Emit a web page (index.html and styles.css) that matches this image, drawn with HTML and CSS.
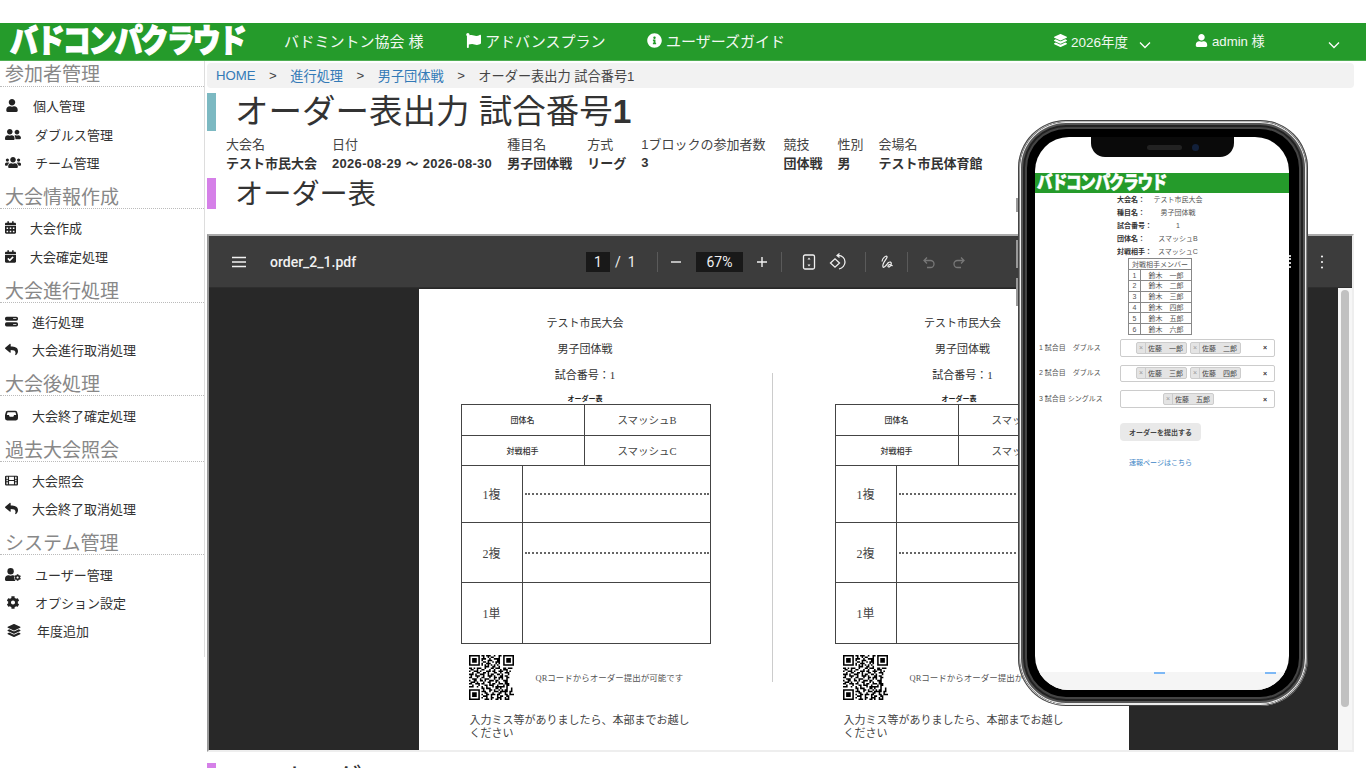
FILE: index.html
```html
<!DOCTYPE html>
<html lang="ja">
<head>
    <meta charset="UTF-8">
    <meta name="viewport" content="width=device-width, initial-scale=1.0">
    <title>オーダー表出力</title>
    <link rel="stylesheet" href="styles.css">
</head>
<body>
    <!-- Icons -->
    <svg class="defs" xmlns="http://www.w3.org/2000/svg">
        <symbol id="i-user" viewBox="0 0 448 512"><path d="M224 256c70.7 0 128-57.3 128-128S294.7 0 224 0 96 57.3 96 128s57.3 128 128 128zm89.6 32h-16.7c-22.2 10.2-46.9 16-72.9 16s-50.6-5.8-72.9-16h-16.7C60.2 288 0 348.2 0 422.4V464c0 26.5 21.5 48 48 48h352c26.5 0 48-21.5 48-48v-41.6c0-74.2-60.2-134.4-134.4-134.4z"/></symbol>
        <symbol id="i-friends" viewBox="0 0 640 512"><path d="M192 256c61.9 0 112-50.1 112-112S253.9 32 192 32 80 82.1 80 144s50.1 112 112 112zm76.8 32h-8.3c-20.8 10-43.9 16-68.5 16s-47.6-6-68.5-16h-8.3C51.6 288 0 339.6 0 403.2V432c0 26.5 21.5 48 48 48h288c26.5 0 48-21.5 48-48v-28.8c0-63.6-51.6-115.2-115.2-115.2zM480 256c53 0 96-43 96-96s-43-96-96-96-96 43-96 96 43 96 96 96zm48 32h-3.8c-13.9 4.8-28.6 8-44.2 8s-30.3-3.2-44.2-8H432c-20.4 0-39.2 5.9-55.7 15.4 24.4 26.3 39.7 61.2 39.7 99.8v38.4c0 2.2-.5 4.3-.6 6.4H592c26.5 0 48-21.5 48-48 0-61.9-50.1-112-112-112z"/></symbol>
        <symbol id="i-users" viewBox="0 0 640 512"><path d="M96 224c35.3 0 64-28.7 64-64s-28.7-64-64-64-64 28.7-64 64 28.7 64 64 64zm448 0c35.3 0 64-28.7 64-64s-28.7-64-64-64-64 28.7-64 64 28.7 64 64 64zm32 32h-64c-17.6 0-33.5 7.1-45.1 18.6 40.3 22.1 68.9 62 75.1 109.4h66c17.7 0 32-14.3 32-32v-32c0-35.3-28.7-64-64-64zm-256 0c61.9 0 112-50.1 112-112S381.9 32 320 32 208 82.1 208 144s50.1 112 112 112zm76.8 32h-8.3c-20.8 10-43.9 16-68.5 16s-47.6-6-68.5-16h-8.3C179.6 288 128 339.6 128 403.2V432c0 26.5 21.5 48 48 48h288c26.5 0 48-21.5 48-48v-28.8c0-63.6-51.6-115.2-115.2-115.2zm-223.7-13.4C161.5 263.1 145.6 256 128 256H64c-35.3 0-64 28.7-64 64v32c0 17.7 14.3 32 32 32h65.9c6.3-47.4 34.9-87.3 75.2-109.4z"/></symbol>
        <symbol id="i-calendar" viewBox="0 0 448 512"><path d="M0 464c0 26.5 21.5 48 48 48h352c26.5 0 48-21.5 48-48V192H0v272zm320-196c0-6.6 5.4-12 12-12h40c6.6 0 12 5.4 12 12v40c0 6.6-5.4 12-12 12h-40c-6.6 0-12-5.4-12-12v-40zm0 128c0-6.6 5.4-12 12-12h40c6.6 0 12 5.4 12 12v40c0 6.6-5.4 12-12 12h-40c-6.6 0-12-5.4-12-12v-40zM192 268c0-6.6 5.4-12 12-12h40c6.6 0 12 5.4 12 12v40c0 6.6-5.4 12-12 12h-40c-6.6 0-12-5.4-12-12v-40zm0 128c0-6.6 5.4-12 12-12h40c6.6 0 12 5.4 12 12v40c0 6.6-5.4 12-12 12h-40c-6.6 0-12-5.4-12-12v-40zM64 268c0-6.6 5.4-12 12-12h40c6.6 0 12 5.4 12 12v40c0 6.6-5.4 12-12 12H76c-6.6 0-12-5.4-12-12v-40zm0 128c0-6.6 5.4-12 12-12h40c6.6 0 12 5.4 12 12v40c0 6.6-5.4 12-12 12H76c-6.6 0-12-5.4-12-12v-40zM400 64h-48V16c0-8.8-7.2-16-16-16h-32c-8.8 0-16 7.2-16 16v48H160V16c0-8.8-7.2-16-16-16h-32c-8.8 0-16 7.2-16 16v48H48C21.5 64 0 85.5 0 112v48h448v-48c0-26.5-21.5-48-48-48z"/></symbol>
        <symbol id="i-calcheck" viewBox="0 0 448 512"><path d="M436 160H12c-6.627 0-12-5.373-12-12v-36c0-26.51 21.49-48 48-48h48V12c0-6.627 5.373-12 12-12h40c6.627 0 12 5.373 12 12v52h128V12c0-6.627 5.373-12 12-12h40c6.627 0 12 5.373 12 12v52h48c26.51 0 48 21.49 48 48v36c0 6.627-5.373 12-12 12zM12 192h424c6.627 0 12 5.373 12 12v260c0 26.51-21.49 48-48 48H48c-26.51 0-48-21.49-48-48V204c0-6.627 5.373-12 12-12zm333.296 95.947l-28.169-28.398c-4.667-4.705-12.265-4.736-16.97-.068L194.12 364.665l-45.98-46.352c-4.667-4.705-12.266-4.736-16.971-.068l-28.397 28.17c-4.705 4.667-4.736 12.265-.068 16.97l82.601 83.269c4.667 4.705 12.265 4.736 16.97.068l142.953-141.805c4.705-4.667 4.736-12.265.068-16.97z"/></symbol>
        <symbol id="i-server" viewBox="0 0 16 14"><path fill-rule="evenodd" d="M2 1h12a2 2 0 0 1 2 2v1a2 2 0 0 1-2 2H2a2 2 0 0 1-2-2V3a2 2 0 0 1 2-2zm8 2v1h4V3zM2 8h12a2 2 0 0 1 2 2v1a2 2 0 0 1-2 2H2a2 2 0 0 1-2-2v-1a2 2 0 0 1 2-2zm8 2v1h4v-1z"/></symbol>
        <symbol id="i-reply" viewBox="0 0 512 512"><path d="M8.309 189.836L184.313 37.851C199.719 24.546 224 35.347 224 56.015v80.053c160.629 1.839 288 34.032 288 186.258 0 61.441-39.581 122.309-83.333 154.132-13.653 9.931-33.111-2.533-28.077-18.631 45.344-145.012-21.507-183.51-176.59-185.742V360c0 20.7-24.3 31.453-39.687 18.164l-176.004-152c-11.071-9.562-11.086-26.753 0-36.328z"/></symbol>
        <symbol id="i-inbox" viewBox="0 0 16 14"><path fill-rule="evenodd" d="M3.500 1h9a2.500 2.500 0 0 1 2.400 1.800l1 3.400c.1.300.1.500.1.800v3.500A2.500 2.500 0 0 1 13.500 13h-11A2.500 2.500 0 0 1 0 10.500V7c0-.3 0-.5.100-.8l1-3.400A2.500 2.500 0 0 1 3.500 1zm0 2a.6.6 0 0 0-.5.400L2.200 6.500h2.600l1 2h4.400l1-2h2.600l-.8-3.100a.6.6 0 0 0-.5-.4z"/></symbol>
        <symbol id="i-film" viewBox="0 0 16 14"><path fill-rule="evenodd" d="M1.500 1h13A1.500 1.500 0 0 1 16 2.500v9a1.500 1.500 0 0 1-1.500 1.500h-13A1.500 1.500 0 0 1 0 11.500v-9A1.500 1.500 0 0 1 1.500 1zm.3 1.500V5h1.700V2.500zm0 3.700v1.600h1.700V6.200zm0 2.900v2.400h1.700V9.100zM5 2.500v3.800h6V2.500zm0 5.200v3.800h6V7.700zm7.500-5.200V5h1.700V2.500zm0 3.700v1.600h1.700V6.200zm0 2.900v2.400h1.700V9.100z"/></symbol>
        <symbol id="i-cog" viewBox="0 0 512 512"><path d="M487.4 315.7l-42.6-24.6c4.3-23.2 4.3-47 0-70.2l42.6-24.6c4.9-2.8 7.1-8.6 5.5-14-11.1-35.6-30-67.8-54.7-94.6-3.8-4.1-10-5.1-14.8-2.3L380.8 110c-17.9-15.4-38.5-27.3-60.8-35.1V25.8c0-5.6-3.9-10.5-9.4-11.7-36.7-8.2-74.3-7.8-109.2 0-5.5 1.2-9.4 6.1-9.4 11.7V75c-22.2 7.9-42.8 19.8-60.8 35.1L88.7 85.500c-4.9-2.8-11-1.9-14.8 2.3-24.7 26.7-43.6 58.9-54.7 94.6-1.7 5.4.6 11.2 5.5 14L67.3 221c-4.3 23.2-4.3 47 0 70.2l-42.6 24.6c-4.9 2.8-7.1 8.6-5.5 14 11.1 35.6 30 67.8 54.7 94.6 3.8 4.1 10 5.1 14.8 2.3l42.6-24.6c17.9 15.4 38.5 27.3 60.8 35.1v49.2c0 5.6 3.9 10.5 9.4 11.7 36.7 8.2 74.3 7.8 109.2 0 5.5-1.2 9.4-6.1 9.4-11.7v-49.2c22.2-7.9 42.8-19.8 60.8-35.1l42.6 24.6c4.9 2.8 11 1.9 14.8-2.3 24.7-26.7 43.6-58.9 54.7-94.6 1.5-5.5-.7-11.3-5.6-14.1zM256 336c-44.1 0-80-35.9-80-80s35.9-80 80-80 80 35.9 80 80-35.9 80-80 80z"/></symbol>
        <symbol id="i-usercog" viewBox="0 0 640 512"><circle cx="224" cy="128" r="128"/><path d="M313 288h-17c-22 10-47 16-72 16s-51-6-73-16h-17C60 288 0 348 0 422v42c0 26 22 48 48 48h352c8 0 15-2 22-5-30-30-52-70-52-115 0-30 8-58 22-82-20-14-48-22-79-22z"/><use href="#i-cog" x="368" y="240" width="272" height="272"/></symbol>
        <symbol id="i-layers" viewBox="0 0 512 512"><path d="M12.41 148.02l232.94 105.67c6.8 3.09 14.49 3.09 21.29 0l232.94-105.67c16.55-7.51 16.55-32.52 0-40.03L266.65 2.31a25.607 25.607 0 0 0-21.29 0L12.41 107.98c-16.55 7.51-16.55 32.53 0 40.04zm487.18 88.28l-58.09-26.33-161.64 73.27c-7.56 3.43-15.59 5.17-23.86 5.17s-16.29-1.74-23.86-5.17L70.51 209.97l-58.1 26.33c-16.55 7.5-16.55 32.5 0 40l232.94 105.59c6.8 3.08 14.49 3.08 21.29 0L499.59 276.3c16.55-7.5 16.55-32.5 0-40zm0 127.8l-57.87-26.23-161.86 73.37c-7.56 3.43-15.59 5.17-23.86 5.17s-16.29-1.74-23.86-5.17L70.29 337.87 12.41 364.1c-16.55 7.5-16.55 32.5 0 40l232.94 105.59c6.8 3.08 14.49 3.08 21.29 0L499.59 404.1c16.55-7.5 16.55-32.5 0-40z"/></symbol>
        <symbol id="i-flag" viewBox="0 0 512 512"><path d="M349.565 98.783C295.978 98.783 251.721 64 184.348 64c-24.955 0-47.309 4.384-68.045 12.013a55.947 55.947 0 0 0 3.586-23.562C118.117 24.015 94.806 1.206 66.338.048 34.345-1.254 8 24.296 8 56c0 19.026 9.497 35.825 24 45.945V488c0 13.255 10.745 24 24 24h16c13.255 0 24-10.745 24-24v-94.4c28.311-12.064 63.582-22.122 114.435-22.122 53.588 0 97.844 34.783 165.217 34.783 48.169 0 86.667-16.294 122.505-40.858C506.84 359.452 512 349.571 512 339.045v-243.1c0-23.393-24.269-38.87-45.485-29.016-34.338 15.948-76.454 31.854-116.95 31.854z"/></symbol>
        <symbol id="i-info" viewBox="0 0 512 512"><path d="M256 8C119.043 8 8 119.083 8 256c0 136.997 111.043 248 248 248s248-111.003 248-248C504 119.083 392.957 8 256 8zm0 110c23.196 0 42 18.804 42 42s-18.804 42-42 42-42-18.804-42-42 18.804-42 42-42zm56 254c0 6.627-5.373 12-12 12h-88c-6.627 0-12-5.373-12-12v-24c0-6.627 5.373-12 12-12h12v-64h-12c-6.627 0-12-5.373-12-12v-24c0-6.627 5.373-12 12-12h64c6.627 0 12 5.373 12 12v100h12c6.627 0 12 5.373 12 12v24z"/></symbol>
        <symbol id="i-chevron" viewBox="0 0 12 8"><path d="M1 1.500l5 5 5-5" fill="none" stroke="currentColor" stroke-width="1.300"/></symbol>
        <symbol id="i-qr" viewBox="0 0 29 29">
            <path fill-rule="evenodd" d="M0 0h7v7H0zm1 1v5h5V1zm1 1h3v3H2zM22 0h7v7h-7zm1 1v5h5V1zm1 1h3v3h-3zM0 22h7v7H0zm1 1v5h5v-5zm1 1h3v3H2z"/>
            <path fill="none" stroke="#000" d="M8 .5h2m1 0h3m2 0h1m2 0h2M9 1.500h1m2 0h1m1 0h2m3 0h1M8 2.500h3m2 0h1m2 0h4M8 3.500h1m3 0h3m3 0h2M9 4.500h2m1 0h1m2 0h1m1 0h3M8 5.500h1m2 0h3m3 0h1m1 0h1M8 6.500h1m1 0h1m1 0h1m1 0h1m1 0h1m1 0h1M10 7.500h3m2 0h2m2 0h1M0 8.500h2m1 0h1m1 0h3m2 0h1m3 0h2m1 0h3m2 0h2m1 0h3M1 9.500h2m2 0h1m2 0h2m3 0h1m2 0h1m3 0h1m1 0h3M0 10.500h1m2 0h3m1 0h1m3 0h3m1 0h2m2 0h3m2 0h1m1 0h1M2 11.500h1m2 0h2m2 0h2m1 0h1m3 0h2m2 0h1m2 0h3M0 12.500h3m1 0h1m2 0h3m2 0h1m1 0h2m2 0h2m1 0h1m3 0h1M1 13.500h1m2 0h3m2 0h1m2 0h3m1 0h1m3 0h2m1 0h2M0 14.500h2m3 0h1m2 0h2m3 0h1m2 0h2m1 0h3m2 0h2M2 15.500h3m2 0h1m2 0h3m3 0h1m2 0h1m1 0h1m2 0h1M0 16.500h1m2 0h2m2 0h2m1 0h1m2 0h3m1 0h2m3 0h3M1 17.500h3m1 0h1m3 0h1m2 0h2m3 0h1m1 0h1m3 0h2M0 18.500h2m2 0h3m1 0h2m3 0h1m1 0h2m2 0h3m1 0h3M2 19.500h1m3 0h1m3 0h2m1 0h3m2 0h1m3 0h1m1 0h2M0 20.500h3m2 0h1m2 0h1m2 0h1m3 0h1m1 0h6m1 0h1M8 21.500h2m1 0h3m3 0h2m1 0h1m3 0h1m2 0h1M9 22.500h1m3 0h2m1 0h1m2 0h1m1 0h1m1 0h2m2 0h1M8 23.500h3m2 0h1m2 0h3m1 0h5m1 0h2M10 24.500h2m3 0h1m3 0h2m2 0h1m2 0h1M8 25.500h1m2 0h2m1 0h3m1 0h2m3 0h2m1 0h3M9 26.500h3m2 0h1m3 0h1m1 0h2m2 0h2M8 27.500h1m2 0h1m2 0h2m2 0h3m2 0h1m1 0h1M10 28.500h3m1 0h1m2 0h2m1 0h1m2 0h3"/>
        </symbol>
    </svg>

    <!-- Navigation -->
    <nav class="navbar">
        <a class="logo">バドコンパクラウド</a>
        <span class="nav-item nav-org">バドミントン協会 様</span>
        <span class="nav-item nav-plan"><svg class="nav-icon"><use href="#i-flag"/></svg>アドバンスプラン</span>
        <span class="nav-item nav-guide"><svg class="nav-icon"><use href="#i-info"/></svg>ユーザーズガイド</span>
        <span class="nav-item nav-year"><svg class="nav-icon-sm"><use href="#i-layers"/></svg>2026年度</span>
        <svg class="nav-chevron nav-chevron-year"><use href="#i-chevron"/></svg>
        <span class="nav-item nav-admin"><svg class="nav-icon-sm"><use href="#i-user"/></svg>admin 様</span>
        <svg class="nav-chevron nav-chevron-admin"><use href="#i-chevron"/></svg>
    </nav>

    <div class="layout">
        <!-- Sidebar -->
        <aside class="sidebar">
            <h3 class="side-head side-first">参加者管理</h3>
            <ul class="side-list">
                <li><svg class="w14"><use href="#i-user"/></svg>個人管理</li>
                <li><svg class="w16"><use href="#i-friends"/></svg>ダブルス管理</li>
                <li><svg class="w16"><use href="#i-users"/></svg>チーム管理</li>
            </ul>
            <h3 class="side-head">大会情報作成</h3>
            <ul class="side-list">
                <li><svg class="w11"><use href="#i-calendar"/></svg>大会作成</li>
                <li><svg class="w11"><use href="#i-calcheck"/></svg>大会確定処理</li>
            </ul>
            <h3 class="side-head">大会進行処理</h3>
            <ul class="side-list">
                <li><svg class="w13"><use href="#i-server"/></svg>進行処理</li>
                <li><svg class="w13"><use href="#i-reply"/></svg>大会進行取消処理</li>
            </ul>
            <h3 class="side-head">大会後処理</h3>
            <ul class="side-list">
                <li><svg class="w13"><use href="#i-inbox"/></svg>大会終了確定処理</li>
            </ul>
            <h3 class="side-head">過去大会照会</h3>
            <ul class="side-list">
                <li><svg class="w13"><use href="#i-film"/></svg>大会照会</li>
                <li><svg class="w13"><use href="#i-reply"/></svg>大会終了取消処理</li>
            </ul>
            <h3 class="side-head">システム管理</h3>
            <ul class="side-list">
                <li><svg class="w16"><use href="#i-usercog"/></svg>ユーザー管理</li>
                <li><svg class="w16"><use href="#i-cog"/></svg>オプション設定</li>
                <li><svg class="w18"><use href="#i-layers"/></svg>年度追加</li>
            </ul>
        </aside>

        <!-- Main Content -->
        <main class="content">
            <div class="breadcrumb">
                <a>HOME</a><span class="crumb-sep">&gt;</span><a>進行処理</a><span class="crumb-sep">&gt;</span><a>男子団体戦</a><span class="crumb-sep">&gt;</span><span>オーダー表出力 試合番号1</span>
            </div>

            <h1 class="page-title">オーダー表出力 試合番号<b>1</b></h1>

            <table class="info-table">
                <tr>
                    <td>大会名</td><td class="info-date">日付</td><td>種目名</td><td>方式</td><td class="info-count">1ブロックの参加者数</td><td>競技</td><td>性別</td><td>会場名</td>
                </tr>
                <tr class="info-values">
                    <td>テスト市民大会</td><td class="info-date">2026-08-29 〜 2026-08-30</td><td>男子団体戦</td><td>リーグ</td><td class="info-count">3</td><td>団体戦</td><td>男</td><td>テスト市民体育館</td>
                </tr>
            </table>

            <h2 class="section-title">オーダー表</h2>

            <!-- PDF viewer -->
            <section class="viewer">
                <div class="viewer-bar">
                    <div class="bar-left">
                        <svg class="tb-icon tb-menu" viewBox="0 0 14 16"><path d="M0 3.500h14M0 8h14M0 12.500h14" stroke="currentColor" stroke-width="1.500" fill="none"/></svg>
                        <span class="file-name">order_2_1.pdf</span>
                    </div>
                    <div class="bar-center">
                        <span class="num-box page-box">1</span>
                        <span class="page-total">/ &nbsp;1</span>
                        <i class="bar-sep sep-a"></i>
                        <svg class="tb-icon zoom-minus" viewBox="0 0 16 16"><path d="M3 8h10" stroke="currentColor" stroke-width="1.400"/></svg>
                        <span class="num-box zoom-box">67%</span>
                        <svg class="tb-icon zoom-plus" viewBox="0 0 16 16"><path d="M3 8h10M8 3v10" stroke="currentColor" stroke-width="1.400"/></svg>
                        <i class="bar-sep sep-b"></i>
                        <svg class="tb-icon tool-fit" viewBox="0 0 16 16"><rect x="2.500" y="1" width="11" height="14" rx="1.500" fill="none" stroke="currentColor" stroke-width="1.300"/><path d="M8 3.500l1.500 2h-3zM8 12.500l1.500-2h-3z" fill="currentColor"/></svg>
                        <svg class="tb-icon tool-rotate" viewBox="0 0 18 18"><path d="M1.500 10L6 5.800l4.500 4.200L6 14.200z" fill="none" stroke="currentColor" stroke-width="1.300"/><path d="M9 2.500c4.500 0 7 3 7 6.500 0 3-2.500 6-6 7" fill="none" stroke="currentColor" stroke-width="1.300"/><path d="M10.500 .5L8 2.500l2.500 2" fill="none" stroke="currentColor" stroke-width="1.200"/></svg>
                        <i class="bar-sep sep-c"></i>
                        <svg class="tb-icon tool-draw" viewBox="0 0 16 16"><path d="M3 7.500C3 4.500 7 1 8 2.500 9 4.500 2.500 9 4 13c1 1.500 4-3 5.500-4.500 1.500-1 3-.5 2.800 1.500-.3 3-3.800 4-3.300 1.800.5-1.800 3-1.300 4.500.2" fill="none" stroke="currentColor" stroke-width="1.200"/></svg>
                        <i class="bar-sep sep-d"></i>
                        <svg class="tb-icon tool-undo" viewBox="0 0 16 16"><path d="M3.500 6.500h6a3.500 3.500 0 0 1 0 7H6M6 3.500l-3 3 3 3" fill="none" stroke="currentColor" stroke-width="1.300"/></svg>
                        <svg class="tb-icon tool-redo" viewBox="0 0 16 16"><path d="M12.500 6.500h-6a3.500 3.500 0 0 0 0 7H10M10 3.500l3 3-3 3" fill="none" stroke="currentColor" stroke-width="1.300"/></svg>
                    </div>
                    <div class="bar-right">
                        <svg class="tb-icon" viewBox="0 0 16 16"><path d="M8 2.500v.01M8 8v.01M8 13.500v.01" stroke="currentColor" stroke-width="2.200" stroke-linecap="round"/></svg>
                    </div>
                </div>
                <div class="viewer-body">
                    <div class="pdf-area">
                        <div class="pdf-page">
                            <div class="sheet sheet-left">
                                <p class="sheet-line">テスト市民大会</p>
                                <p class="sheet-line">男子団体戦</p>
                                <p class="sheet-line">試合番号：1</p>
                                <p class="sheet-caption">オーダー表</p>
                                <table class="order-table">
                                    <colgroup><col class="c1"><col class="c2"><col class="c3"></colgroup>
                                    <tr class="r-head"><td colspan="2" class="small-cell">団体名</td><td class="value-cell">スマッシュB</td></tr>
                                    <tr class="r-head"><td colspan="2" class="small-cell">対戦相手</td><td class="value-cell">スマッシュC</td></tr>
                                    <tr class="r-a"><td>1複</td><td colspan="2" class="dots-cell"><div class="dots"></div></td></tr>
                                    <tr class="r-b"><td>2複</td><td colspan="2" class="dots-cell"><div class="dots"></div></td></tr>
                                    <tr class="r-c"><td>1単</td><td colspan="2"></td></tr>
                                </table>
                                <div class="qr-row">
                                    <svg class="qr"><use href="#i-qr"/></svg>
                                    <span class="qr-text">QRコードからオーダー提出が可能です</span>
                                </div>
                                <p class="sheet-note">入力ミス等がありましたら、本部までお越しください</p>
                            </div>
                            <div class="sheet-rule"></div>
                            <div class="sheet sheet-right">
                                <p class="sheet-line">テスト市民大会</p>
                                <p class="sheet-line">男子団体戦</p>
                                <p class="sheet-line">試合番号：1</p>
                                <p class="sheet-caption">オーダー表</p>
                                <table class="order-table">
                                    <colgroup><col class="c1"><col class="c2"><col class="c3"></colgroup>
                                    <tr class="r-head"><td colspan="2" class="small-cell">団体名</td><td class="value-cell">スマッシュC</td></tr>
                                    <tr class="r-head"><td colspan="2" class="small-cell">対戦相手</td><td class="value-cell">スマッシュB</td></tr>
                                    <tr class="r-a"><td>1複</td><td colspan="2" class="dots-cell"><div class="dots"></div></td></tr>
                                    <tr class="r-b"><td>2複</td><td colspan="2" class="dots-cell"><div class="dots"></div></td></tr>
                                    <tr class="r-c"><td>1単</td><td colspan="2"></td></tr>
                                </table>
                                <div class="qr-row">
                                    <svg class="qr"><use href="#i-qr"/></svg>
                                    <span class="qr-text">QRコードからオーダー提出が可能です</span>
                                </div>
                                <p class="sheet-note">入力ミス等がありましたら、本部までお越しください</p>
                            </div>
                        </div>
                    </div>
                    <div class="scroll-track"><div class="scroll-thumb"></div></div>
                </div>
            </section>

            <h2 class="section-title section-next">QRオーダー</h2>
        </main>
    </div>

    <!-- Phone mockup over the page -->
    <div class="phone">
        <i class="phone-key key-a"></i>
        <i class="phone-key key-b"></i>
        <i class="phone-key key-c"></i>
        <div class="phone-band">
            <div class="screen">
                <div class="notch"><i class="speaker"></i><i class="camera"></i></div>
                <div class="m-bar"><span class="m-logo">バドコンパクラウド</span></div>
                <div class="m-body">
                    <table class="m-info">
                        <tr><th>大会名：</th><td>テスト市民大会</td></tr>
                        <tr><th>種目名：</th><td>男子団体戦</td></tr>
                        <tr><th>試合番号：</th><td>1</td></tr>
                        <tr><th>団体名：</th><td>スマッシュB</td></tr>
                        <tr><th>対戦相手：</th><td>スマッシュC</td></tr>
                    </table>
                    <table class="m-members">
                        <tr><th colspan="2">対戦相手メンバー</th></tr>
                        <tr><td>1</td><td>鈴木　一郎</td></tr>
                        <tr><td>2</td><td>鈴木　二郎</td></tr>
                        <tr><td>3</td><td>鈴木　三郎</td></tr>
                        <tr><td>4</td><td>鈴木　四郎</td></tr>
                        <tr><td>5</td><td>鈴木　五郎</td></tr>
                        <tr><td>6</td><td>鈴木　六郎</td></tr>
                    </table>
                    <div class="m-row">
                        <span class="m-label">1 試合目　ダブルス</span>
                        <div class="m-select">
                            <div class="m-tags"><span class="m-tag"><b>×</b>佐藤　一郎</span><span class="m-tag"><b>×</b>佐藤　二郎</span></div>
                            <span class="m-clear">×</span>
                        </div>
                    </div>
                    <div class="m-row">
                        <span class="m-label">2 試合目　ダブルス</span>
                        <div class="m-select">
                            <div class="m-tags"><span class="m-tag"><b>×</b>佐藤　三郎</span><span class="m-tag"><b>×</b>佐藤　四郎</span></div>
                            <span class="m-clear">×</span>
                        </div>
                    </div>
                    <div class="m-row">
                        <span class="m-label">3 試合目 シングルス</span>
                        <div class="m-select">
                            <div class="m-tags"><span class="m-tag"><b>×</b>佐藤　五郎</span></div>
                            <span class="m-clear">×</span>
                        </div>
                    </div>
                    <button class="m-submit">オーダーを提出する</button>
                    <a class="m-link">速報ページはこちら</a>
                </div>
                <div class="m-foot"><i class="tick tick-a"></i><i class="tick tick-b"></i></div>
            </div>
        </div>
        <i class="phone-dots"></i>
    </div>
</body>
</html>
```

FILE: styles.css
```css
/* Base */
* {
    box-sizing: border-box;
}

html, body {
    height: 768px;
    overflow: hidden;
}

body {
    margin: 0;
    padding-top: 23px;
    background-color: white;
    color: #333;
    font-family: "Liberation Sans", "Noto Sans CJK JP", sans-serif;
    font-size: 13px;
    position: relative;
}

.defs {
    display: none;
}

/* Navbar */
.navbar {
    display: flex;
    align-items: center;
    height: 38px;
    background-color: #259b2b;
    color: white;
    border-bottom: 1px solid #4fae53;
}

.logo {
    width: 284px;
    padding-left: 10px;
    font-size: 28px;
    font-weight: 900;
    letter-spacing: -2px;
    line-height: 34px;
    white-space: nowrap;
    -webkit-text-stroke: 1px white;
    transform: scaleY(1.15);
}

.nav-item {
    display: flex;
    align-items: center;
    padding-bottom: 2px;
    font-size: 15px;
    white-space: nowrap;
    color: #f2f8f2;
}

.nav-icon {
    width: 15px;
    height: 15px;
    margin-right: 4px;
    fill: white;
}

.nav-icon-sm {
    width: 13px;
    height: 13px;
    margin-right: 4px;
    fill: white;
}

.nav-org {
    width: 182px;
}

.nav-plan {
    width: 181px;
}

.nav-guide {
    width: 407px;
}

.nav-year {
    width: 85px;
    font-size: 13.500px;
}

.nav-admin {
    width: 133px;
    font-size: 13.200px;
}

.nav-chevron {
    width: 12px;
    height: 8px;
    margin-top: 6px;
    color: white;
}

.nav-chevron-year {
    margin-right: 44px;
}

/* Sidebar */
.layout {
    display: flex;
    align-items: flex-start;
}

.sidebar {
    width: 205px;
    height: 596px;
    flex-shrink: 0;
    border-right: 1px solid #ddd;
}

.side-head {
    margin: 0;
    height: 31px;
    padding: 10px 0 0 5px;
    border-bottom: 1px dotted #bbb;
    color: #888;
    font-size: 19px;
    font-weight: normal;
    line-height: 20px;
}

.side-first {
    height: 26px;
    padding-top: 4px;
}

.side-list {
    list-style: none;
    margin: 0;
    padding: 4.500px 0 1.400px 5px;
}

.side-list li {
    display: flex;
    align-items: center;
    height: 28.400px;
    color: #333;
    font-size: 13px;
}

.side-list svg {
    height: 13px;
    margin-right: 14px;
    fill: #222;
}

.w11 { width: 11px; }
.w13 { width: 13px; }
.w14 { width: 14px; }
.w16 { width: 16px; }
.w18 { width: 18px; }

/* Main content */
.content {
    width: 1147px;
    margin-left: 2px;
    padding-top: 2px;
}

.breadcrumb {
    display: flex;
    align-items: center;
    height: 25px;
    padding-left: 9px;
    background-color: #f2f2f2;
    border-radius: 4px;
    font-size: 13.200px;
    color: #444;
}

.breadcrumb a {
    color: #337ab7;
}

.crumb-sep {
    margin: 0 13.500px;
}

.page-title {
    margin: 5px 0 0;
    height: 38px;
    padding-left: 19px;
    border-left: 9px solid #7cb9c2;
    color: #333;
    font-size: 33.500px;
    font-weight: normal;
    line-height: 38px;
}

.info-table {
    border-collapse: collapse;
    margin: 3px 0 0 19px;
    font-size: 13px;
}

.info-table td {
    padding: 0 15px 0 0;
    height: 19px;
    white-space: nowrap;
    color: #444;
}

.info-table .info-count {
    padding-right: 18px;
}

.info-values td {
    font-weight: bold;
    color: #333;
}

.info-values .info-date {
    letter-spacing: .3px;
}

.section-title {
    margin: 6px 0 0;
    height: 31px;
    padding-left: 19px;
    border-left: 9px solid #d580e8;
    color: #333;
    font-size: 28.200px;
    font-weight: normal;
    line-height: 33px;
}

.section-next {
    margin-top: 11px;
}

/* PDF viewer */
.viewer {
    height: 518px;
    margin-top: 25px;
    border: 2px solid #eee;
    border-top-color: #aaa;
    border-left-color: #999;
    background-color: #282828;
}

.viewer-bar {
    display: grid;
    grid-template-columns: 1fr auto 1fr;
    align-items: center;
    height: 52px;
    background-color: #3c3c3c;
    color: #f1f1f1;
    border-bottom: 1px solid #2e2e2e;
}

.bar-left {
    display: flex;
    align-items: center;
    padding-left: 23px;
}

.tb-icon {
    width: 16px;
    height: 16px;
    flex-shrink: 0;
}

.tb-menu {
    width: 14px;
}

.file-name {
    margin-left: 24px;
    font-family: Roboto, sans-serif;
    font-size: 14px;
    font-weight: 500;
}

.bar-center {
    display: flex;
    align-items: center;
    padding-right: 8px;
    font-family: Roboto, sans-serif;
    font-size: 14px;
}

.num-box {
    height: 20px;
    line-height: 20px;
    text-align: center;
    background-color: #191919;
}

.page-box {
    width: 24px;
}

.page-total {
    margin-left: 5px;
    width: 24px;
    white-space: nowrap;
}

.bar-sep {
    width: 1px;
    height: 20px;
    background-color: #5a5a5a;
}

.sep-a { margin-left: 18px; }
.zoom-minus { margin-left: 10px; }
.zoom-box { width: 47px; margin-left: 12px; }
.zoom-plus { margin-left: 11px; }
.sep-b { margin-left: 11px; }
.tool-fit { margin-left: 19px; }
.tool-rotate { margin-left: 12px; width: 18px; height: 18px; }
.sep-c { margin-left: 18px; }
.tool-draw { margin-left: 13px; }
.sep-d { margin-left: 12px; }
.tool-undo { margin-left: 13px; color: #777; }
.tool-redo { margin-left: 14px; color: #777; }

.bar-right {
    display: flex;
    justify-content: flex-end;
    padding-right: 22px;
}

.viewer-body {
    display: flex;
    height: 462px;
}

.pdf-area {
    flex: 1;
    display: flex;
    justify-content: center;
    padding-top: 1px;
    overflow: hidden;
}

.scroll-track {
    width: 14px;
    background-color: #f6f6f6;
    padding: 2px 3px 0 3px;
}

.scroll-thumb {
    height: 417px;
    border-radius: 4px;
    background-color: #c1c1c1;
}

/* PDF page */
.pdf-page {
    display: flex;
    align-items: flex-start;
    width: 710px;
    background-color: white;
    color: #333;
    font-family: "Liberation Serif", "Noto Sans CJK JP", serif;
}

.sheet {
    padding-top: 27px;
}

.sheet-left {
    width: 353px;
    padding-left: 42px;
}

.sheet-right {
    padding-left: 62px;
}

.sheet-rule {
    width: 1px;
    height: 309px;
    margin-top: 84px;
    background-color: #ccc;
    flex-shrink: 0;
}

.sheet-line {
    width: 249px;
    margin: 0;
    height: 26px;
    text-align: center;
    font-size: 11px;
    line-height: 14px;
}

.sheet-right .sheet-line {
    padding-left: 7px;
}

.sheet-caption {
    width: 249px;
    margin: 0;
    height: 8px;
    text-align: center;
    font-family: "Noto Sans CJK JP", sans-serif;
    font-size: 7px;
    font-weight: bold;
    line-height: 8px;
    color: #222;
}

.order-table {
    width: 249px;
    margin-top: 2px;
    border-collapse: collapse;
    table-layout: fixed;
    color: #444;
}

.c1 { width: 61px; }
.c2 { width: 62px; }
.c3 { width: 126px; }

.order-table td {
    padding: 0;
    border: 1px solid #444;
    text-align: center;
    font-size: 12px;
}

.r-head {
    height: 30.500px;
}

.r-a { height: 57px; }
.r-b { height: 60px; }
.r-c { height: 61px; }

.order-table .small-cell {
    font-family: "Noto Sans CJK JP", sans-serif;
    font-size: 8px;
    font-weight: 500;
    color: #333;
}

.order-table .value-cell {
    font-size: 10.500px;
}

.order-table .dots-cell {
    padding: 0 1px 0 2px;
}

.dots {
    border-top: 2px dotted #666;
}

.qr-row {
    display: flex;
    align-items: center;
    margin-top: 11px;
    padding-left: 7px;
}

.qr {
    width: 47px;
    height: 45px;
    flex-shrink: 0;
}

.qr-text {
    margin: 0 0 2px 21px;
    font-size: 8.500px;
    white-space: nowrap;
    color: #555;
}

.sheet-note {
    width: 222px;
    margin: 14px 0 0 9px;
    font-size: 11px;
    line-height: 13px;
    color: #444;
}

/* Phone mockup */
.phone {
    position: absolute;
    left: 1018px;
    top: 120px;
    width: 290px;
    height: 586px;
    padding: 2px;
    border-radius: 48px;
    background: linear-gradient(180deg, #bbb 0%, #888 12%, #777 50%, #888 90%, #eee 100%);
    box-shadow: inset 0 0 0 1px #444;
}

.phone-key {
    position: absolute;
    left: -2px;
    width: 2px;
    background-color: #999;
}

.key-a { top: 78px; height: 14px; }
.key-b { top: 120px; height: 28px; }
.key-c { top: 158px; height: 28px; }

.phone-band {
    width: 100%;
    height: 100%;
    padding: 15px 17px 14px 15px;
    border-radius: 46px;
    background-color: #000;
    box-shadow: inset 0 0 0 1px #eee, inset 0 0 0 3px #555, inset 0 0 0 5px #222, inset 0 0 0 7px #444;
}

.phone-dots {
    position: absolute;
    left: 271px;
    top: 135px;
    height: 13px;
    border-left: 2px dotted #ccc;
}

.screen {
    position: relative;
    display: flex;
    flex-direction: column;
    height: 100%;
    padding-top: 36px;
    background-color: white;
    border-radius: 34px;
    overflow: hidden;
}

.notch {
    position: absolute;
    left: 56px;
    top: 0;
    display: flex;
    align-items: center;
    justify-content: flex-end;
    width: 143px;
    height: 20px;
    padding-right: 35px;
    background-color: #0a0a0a;
    border-radius: 0 0 14px 14px;
}

.speaker {
    width: 35px;
    height: 5px;
    margin-right: 10px;
    background-color: #222;
    border-radius: 3px;
}

.camera {
    width: 7px;
    height: 7px;
    border-radius: 50%;
    background-color: #12203a;
}

.m-bar {
    height: 20px;
    background-color: #259b2b;
    padding-left: 2px;
    color: white;
}

.m-logo {
    display: block;
    font-size: 15.500px;
    font-weight: 900;
    letter-spacing: -1.200px;
    line-height: 20px;
    white-space: nowrap;
    -webkit-text-stroke: .5px white;
    transform: scaleY(1.15);
}

.m-body {
    flex: 1;
    display: flex;
    flex-direction: column;
    align-items: flex-start;
    color: #555;
    font-size: 7px;
}

.m-info {
    margin: 0 0 0 82px;
    border-collapse: collapse;
}

.m-info th {
    height: 12.900px;
    padding: 0;
    text-align: left;
    color: #333;
    font-weight: bold;
    white-space: nowrap;
}

.m-info td {
    width: 52px;
    padding: 0;
    text-align: center;
    white-space: nowrap;
}

.m-members {
    width: 64px;
    margin: 1px 0 0 93px;
    border-collapse: collapse;
}

.m-members th,
.m-members td {
    height: 10.800px;
    padding: 0;
    border: 1px solid #888;
    text-align: center;
    font-weight: normal;
    line-height: 9px;
    white-space: nowrap;
}

.m-members td:first-child {
    width: 12px;
}

.m-row {
    display: flex;
    align-items: center;
    height: 17.500px;
    margin-top: 8.200px;
    padding-left: 4px;
}

.m-row:first-of-type {
    margin-top: 4px;
}

.m-label {
    width: 81px;
    padding-bottom: 2px;
    white-space: nowrap;
}

.m-select {
    display: flex;
    align-items: center;
    width: 155px;
    height: 17.500px;
    border: 1px solid #ccc;
    border-radius: 2px;
}

.m-tags {
    flex: 1;
    display: flex;
    justify-content: center;
    gap: 3px;
}

.m-tag {
    display: flex;
    align-items: center;
    width: 51px;
    height: 12px;
    background-color: #e4e4e4;
    border: 1px solid #ccc;
    border-radius: 2px;
    white-space: nowrap;
    color: #444;
}

.m-tag b {
    width: 9px;
    margin-right: 2px;
    border-right: 1px solid #ccc;
    text-align: center;
    color: #999;
    font-weight: normal;
    line-height: 10px;
}

.m-clear {
    width: 18px;
    text-align: center;
    color: #333;
    font-weight: bold;
}

.m-submit {
    width: 81px;
    height: 18px;
    margin: 15px 0 0 85px;
    padding: 0;
    border: 0;
    border-radius: 4px;
    background-color: #e9e9e9;
    color: #444;
    font-family: inherit;
    font-size: 7px;
    font-weight: bold;
}

.m-link {
    width: 81px;
    margin: 16px 0 0 85px;
    text-align: center;
    color: #3d85c6;
    white-space: nowrap;
}

.m-foot {
    position: relative;
    display: flex;
    height: 18px;
    flex-shrink: 0;
    background-color: #f5f5f5;
}

.tick {
    height: 1.500px;
    width: 11px;
    background-color: #7db8f5;
}

.tick-a { margin-left: 119px; }
.tick-b { margin-left: 100px; }
```
